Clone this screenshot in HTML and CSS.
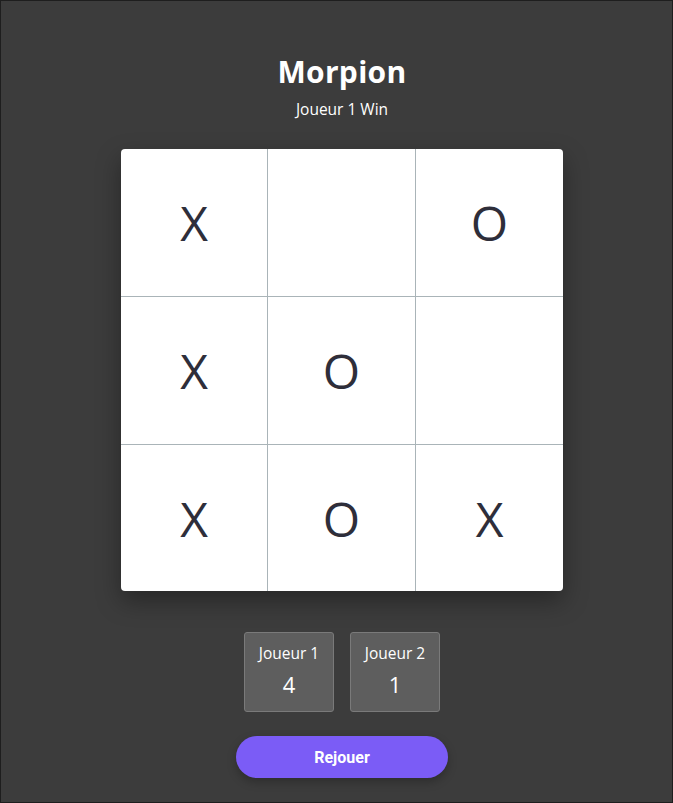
FILE: index.html
```html
<!DOCTYPE html>
<html lang="fr">
<head>
<meta charset="utf-8">
<title>Morpion</title>
<link rel="stylesheet" href="styles.css">
</head>
<body>
<main class="app">
  <h1 class="title">Morpion</h1>
  <p class="status">Joueur 1 Win</p>
  <div class="board">
    <div class="cell">X</div>
    <div class="cell"></div>
    <div class="cell">O</div>
    <div class="cell">X</div>
    <div class="cell">O</div>
    <div class="cell"></div>
    <div class="cell">X</div>
    <div class="cell">O</div>
    <div class="cell">X</div>
  </div>
  <div class="scores">
    <div class="score"><span class="score-name">Joueur 1</span><span class="score-value">4</span></div>
    <div class="score"><span class="score-name">Joueur 2</span><span class="score-value">1</span></div>
  </div>
  <button class="replay">Rejouer</button>
</main>
</body>
</html>
```
FILE: styles.css
```css
html, body {
  margin: 0;
  padding: 0;
  height: 100%;
}
body {
  background: #3c3c3c;
  font-family: "Open Sans", "Noto Sans", sans-serif;
  color: #fff;
}
.app {
  box-sizing: border-box;
  height: 803px;
  border: 1px solid #1e1e1e;
  display: flex;
  flex-direction: column;
  align-items: center;
  padding-top: 51px;
  padding-left: 11px;
}
.title {
  margin: 0;
  font-size: 30px;
  font-weight: 700;
  line-height: 40px;
  letter-spacing: 0.3px;
}
.status {
  margin: 6px 0 0;
  font-size: 15.5px;
  line-height: 22px;
}
.board {
  margin-top: 29px;
  width: 442px;
  height: 442px;
  background: #fff;
  border-radius: 4px;
  display: grid;
  grid-template-columns: 147px 148px 147px;
  grid-template-rows: 148px 148px 146px;
  box-shadow: 0 10px 24px rgba(0,0,0,0.35);
  overflow: hidden;
}
.cell {
  display: flex;
  align-items: center;
  justify-content: center;
  font-size: 48px;
  color: #2e2e3a;
  border-right: 1px solid #aab4b8;
  border-bottom: 1px solid #aab4b8;
}
.cell:nth-child(3n) { border-right: none; }
.cell:nth-child(n+7) { border-bottom: none; }
.scores {
  margin-top: 41px;
  display: flex;
  gap: 16px;
}
.score {
  box-sizing: border-box;
  width: 90px;
  height: 80px;
  background: #5e5e5e;
  border: 1px solid #7a7a7a;
  border-radius: 3px;
  display: flex;
  flex-direction: column;
  align-items: center;
  padding-top: 10px;
}
.score-name {
  font-size: 15.5px;
  line-height: 20px;
}
.score-value {
  margin-top: 8px;
  font-size: 22px;
  line-height: 26px;
}
.replay {
  margin-top: 24px;
  width: 212px;
  height: 42px;
  border: none;
  border-radius: 21px;
  background: #7b5cf6;
  color: #fff;
  font-family: "Roboto", "Liberation Sans", sans-serif;
  font-weight: 700;
  font-size: 16px;
  box-shadow: 0 4px 10px rgba(0,0,0,0.25);
}
```
